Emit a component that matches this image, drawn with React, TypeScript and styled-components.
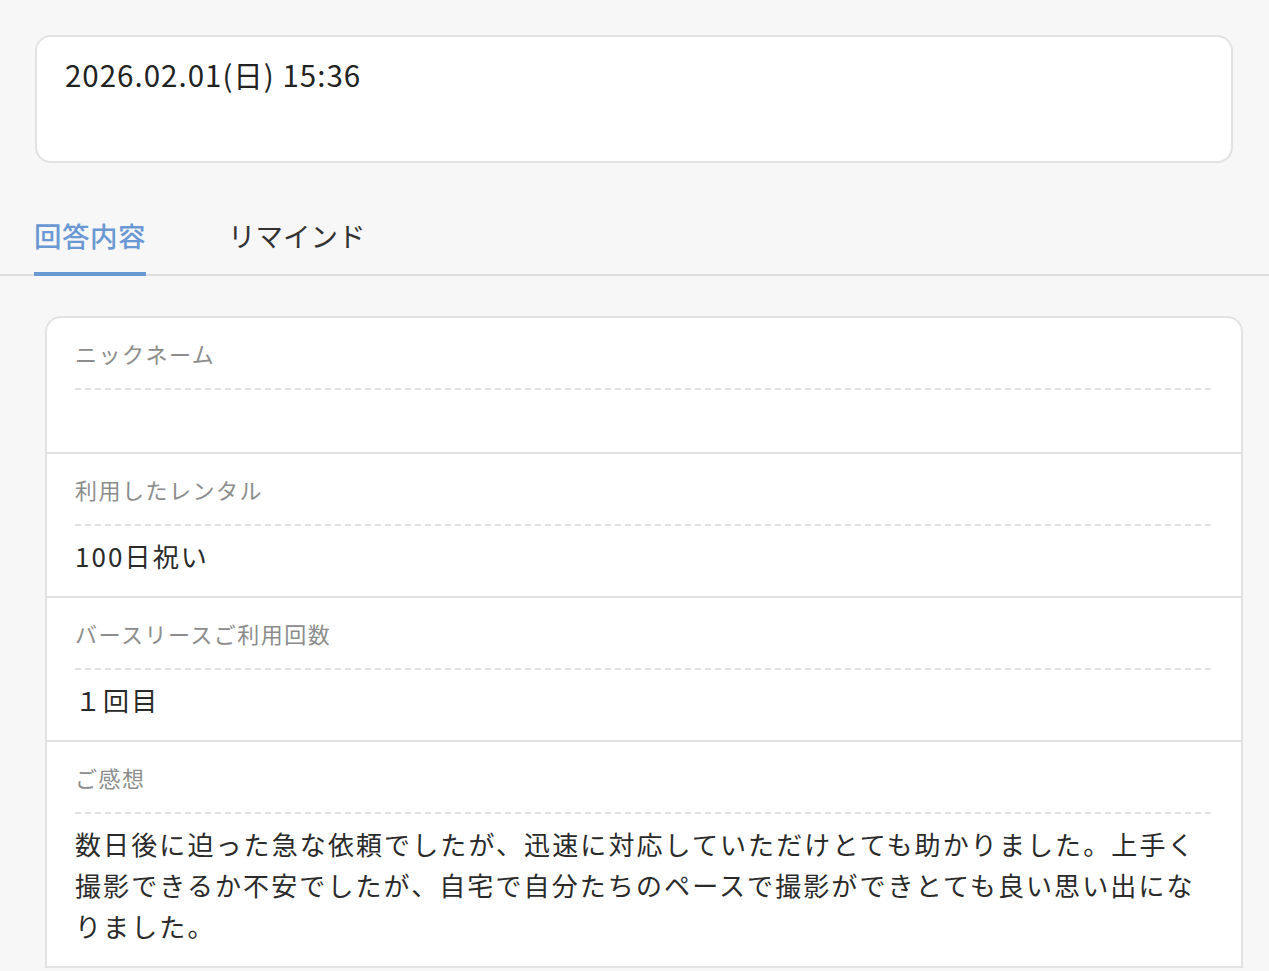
import styled, { createGlobalStyle } from "styled-components";

const GlobalStyle = createGlobalStyle`
  html, body {
    margin: 0;
    padding: 0;
    background: #f7f7f7;
  }
  body {
    font-family: "Noto Sans CJK JP", "Noto Sans", sans-serif;
    color: #333;
  }
`;

const answers = [
  { label: "ニックネーム", value: "" },
  { label: "利用したレンタル", value: "100日祝い" },
  { label: "バースリースご利用回数", value: "１回目" },
  {
    label: "ご感想",
    value:
      "数日後に迫った急な依頼でしたが、迅速に対応していただけとても助かりました。上手く撮影できるか不安でしたが、自宅で自分たちのペースで撮影ができとても良い思い出になりました。",
  },
];

const App = () => {
  return (
    <>
      <GlobalStyle />
      <Page>
        <Header>
          <DateCard>
            <DateText>2026.02.01(日) 15:36</DateText>
            <NameText>&nbsp;</NameText>
          </DateCard>
        </Header>
        <TabBar>
          <Tab $active>回答内容</Tab>
          <Tab>リマインド</Tab>
        </TabBar>
        <Content>
          <AnswerCard>
            {answers.map((a) => (
              <Row key={a.label}>
                <Label>{a.label}</Label>
                <Value $empty={!a.value}>{a.value}</Value>
              </Row>
            ))}
          </AnswerCard>
        </Content>
      </Page>
    </>
  );
};

const Page = styled.div`
  min-height: 971px;
  overflow: hidden;
`;

const Header = styled.div`
  padding: 35px 36px 0 35px;
`;

const DateCard = styled.div`
  background: #fff;
  border: 2px solid #e2e2e2;
  border-radius: 16px;
  padding: 17px 28px 27px;
`;

const DateText = styled.div`
  font-size: 29.5px;
  line-height: 40px;
  color: #222;
  letter-spacing: 1px;
`;

const NameText = styled.div`
  font-size: 26px;
  line-height: 40px;
`;

const TabBar = styled.div`
  display: flex;
  gap: 82px;
  margin-top: 52px;
  padding-left: 34px;
  border-bottom: 2px solid #dedede;
`;

const Tab = styled.div<{ $active?: boolean }>`
  font-size: 27.5px;
  line-height: 40px;
  padding-bottom: 17px;
  margin-bottom: -2px;
  letter-spacing: ${(p) => (p.$active ? "0.5px" : "0")};
  color: ${(p) => (p.$active ? "#6a98d3" : "#333")};
  font-weight: ${(p) => (p.$active ? 500 : 400)};
  border-bottom: 4px solid ${(p) => (p.$active ? "#6a98d3" : "transparent")};
`;

const Content = styled.div`
  padding: 40px 26px 0 45px;
`;

const AnswerCard = styled.div`
  background: #fff;
  border: 2px solid #e2e2e2;
  border-bottom: none;
  border-radius: 16px 16px 0 0;
`;

const Row = styled.div`
  padding: 20px 27px 0 28px;
  border-bottom: 2px solid #e2e2e2;
`;

const Label = styled.div`
  font-size: 22px;
  line-height: 30px;
  letter-spacing: 1.5px;
  color: #8c8c8c;
  padding-bottom: 22px;
  background-image: repeating-linear-gradient(
    to right,
    #e0e0e0 0 6px,
    transparent 6px 10px
  );
  background-size: 100% 2px;
  background-repeat: no-repeat;
  background-position: bottom left;
`;

const Value = styled.div<{ $empty?: boolean }>`
  font-size: 26px;
  line-height: 41px;
  letter-spacing: 2.1px;
  color: #2a2a2a;
  padding: 9px 0 20px;
  min-height: ${(p) => (p.$empty ? "33px" : "41px")};
  height: ${(p) => (p.$empty ? "33px" : "auto")};
`;

export default App;
